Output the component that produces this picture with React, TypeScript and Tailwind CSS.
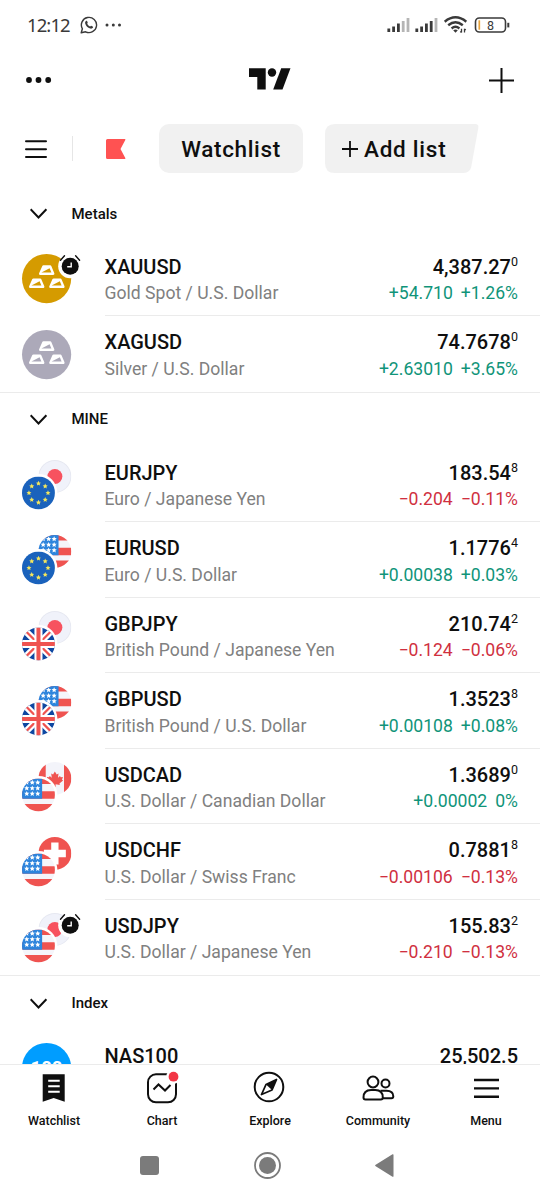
import React from 'react';

type FlagId = 'eu' | 'jp' | 'us' | 'gb' | 'ca' | 'ch';

interface Quote {
  symbol: string;
  description?: string;
  price: string;
  pip?: string;
  change?: string;
  percent?: string;
  up?: boolean;
  flags?: [FlagId, FlagId];
  metal?: string;
  alarm?: boolean;
}

interface Section {
  title: string;
  quotes: Quote[];
}

const sections: Section[] = [
  {
    title: 'Metals',
    quotes: [
      { symbol: 'XAUUSD', description: 'Gold Spot / U.S. Dollar', price: '4,387.27', pip: '0', change: '+54.710', percent: '+1.26%', up: true, metal: '#D59B00', alarm: true },
      { symbol: 'XAGUSD', description: 'Silver / U.S. Dollar', price: '74.7678', pip: '0', change: '+2.63010', percent: '+3.65%', up: true, metal: '#ACA9B9' }
    ]
  },
  {
    title: 'MINE',
    quotes: [
      { symbol: 'EURJPY', description: 'Euro / Japanese Yen', price: '183.54', pip: '8', change: '−0.204', percent: '−0.11%', up: false, flags: ['eu', 'jp'] },
      { symbol: 'EURUSD', description: 'Euro / U.S. Dollar', price: '1.1776', pip: '4', change: '+0.00038', percent: '+0.03%', up: true, flags: ['eu', 'us'] },
      { symbol: 'GBPJPY', description: 'British Pound / Japanese Yen', price: '210.74', pip: '2', change: '−0.124', percent: '−0.06%', up: false, flags: ['gb', 'jp'] },
      { symbol: 'GBPUSD', description: 'British Pound / U.S. Dollar', price: '1.3523', pip: '8', change: '+0.00108', percent: '+0.08%', up: true, flags: ['gb', 'us'] },
      { symbol: 'USDCAD', description: 'U.S. Dollar / Canadian Dollar', price: '1.3689', pip: '0', change: '+0.00002', percent: '0%', up: true, flags: ['us', 'ca'] },
      { symbol: 'USDCHF', description: 'U.S. Dollar / Swiss Franc', price: '0.7881', pip: '8', change: '−0.00106', percent: '−0.13%', up: false, flags: ['us', 'ch'] },
      { symbol: 'USDJPY', description: 'U.S. Dollar / Japanese Yen', price: '155.83', pip: '2', change: '−0.210', percent: '−0.13%', up: false, flags: ['us', 'jp'], alarm: true }
    ]
  },
  {
    title: 'Index',
    quotes: [{ symbol: 'NAS100', price: '25,502.5' }]
  }
];

const starPath = (cx: number, cy: number, r: number) => {
  const points: string[] = [];
  for (let i = 0; i < 10; i++) {
    const radius = i % 2 === 0 ? r : r * 0.48;
    const angle = (Math.PI / 5) * i - Math.PI / 2;
    points.push(`${(cx + radius * Math.cos(angle)).toFixed(2)} ${(cy + radius * Math.sin(angle)).toFixed(2)}`);
  }
  return `M${points.join('L')}Z`;
};

const flagArt: Record<FlagId, React.ReactNode> = {
  eu: (
    <>
      <path fill="#1A62BC" d="M0 0h18v18H0z" />
      {[0, 1, 2, 3, 4, 5, 6, 7].map((i) => (
        <path
          key={i}
          fill="#F5E75C"
          d={starPath(9 + 5.2 * Math.cos((Math.PI / 4) * i), 9 + 5.2 * Math.sin((Math.PI / 4) * i), 1.45)}
        />
      ))}
    </>
  ),
  jp: (
    <>
      <path fill="#E6E8F1" d="M0 0h18v18H0z" />
      <circle cx="9" cy="9" r="8.5" fill="#F0F2FA" />
      <circle cx="9" cy="9" r="4.1" fill="#F7525F" />
    </>
  ),
  us: (
    <>
      <path fill="#F5F5FA" d="M0 0h18v18H0z" />
      <path fill="#EF5350" d="M0 0h18v3H0zM0 7h18v4H0zM0 14h18v4H0z" />
      <path fill="#2D84DC" d="M0 0h11v11H0z" />
      {[2.2, 5.3, 8.3].map((y) =>
        [2.6, 5.6, 8.6].map((x) => <path key={`${x}-${y}`} fill="#fff" d={starPath(x, y, 1.5)} />)
      )}
    </>
  ),
  gb: (
    <>
      <path fill="#0E47A1" d="M0 0h18v18H0z" />
      <path stroke="#fff" strokeWidth="3.6" d="M1 1l16 16M17 1L1 17" />
      <path stroke="#EF5350" strokeWidth="1.2" d="M1 1l16 16M17 1L1 17" />
      <path stroke="#fff" strokeWidth="4.4" d="M9 0v18M0 9h18" />
      <path stroke="#EF5350" strokeWidth="2.2" d="M9 0v18M0 9h18" />
    </>
  ),
  ca: (
    <>
      <path fill="#F3F4FA" d="M0 0h18v18H0z" />
      <path fill="#EF5350" d="M0 0h4v18H0zM14 0h4v18h-4z" />
      <path
        fill="#EF5350"
        d="M9 5.2l1 1.6 1-.5-.3 2.3 1.1-.9.4.7 1.2-.2-.5 1.5.6.4-2 1.6.2.8-2.3-.3v1.6h-.8v-1.6l-2.3.3.2-.8-2-1.6.6-.4-.5-1.5 1.2.2.4-.7 1.1.9L7 6.3l1 .5z"
      />
    </>
  ),
  ch: (
    <>
      <path fill="#EF5350" d="M0 0h18v18H0z" />
      <path fill="#fff" d="M7 3h4v4h4v4h-4v4H7v-4H3V7h4z" />
    </>
  )
};

const PairIcon: React.FC<{ id: string; flags: [FlagId, FlagId] }> = ({ id, flags }) => (
  <>
    <defs>
      <clipPath id={`${id}-flag`}>
        <circle cx="9" cy="9" r="9" />
      </clipPath>
    </defs>
    <g transform="translate(16.4 0) scale(1.83)">
      <g clipPath={`url(#${id}-flag)`}>{flagArt[flags[1]]}</g>
    </g>
    <circle cx="16.4" cy="32.9" r="19" fill="#fff" />
    <g transform="translate(0 16.5) scale(1.83)">
      <g clipPath={`url(#${id}-flag)`}>{flagArt[flags[0]]}</g>
    </g>
  </>
);

const MetalIcon: React.FC<{ color: string }> = ({ color }) => (
  <>
    <circle cx="24.6" cy="24.6" r="24.6" fill={color} />
    {[[17, 11.3], [7, 24.4], [27.2, 24.4]].map(([x, y]) => (
      <g key={x} transform={`translate(${x} ${y})`}>
        <path d="M4.4 1.2h6.8l3 7.2H1.2z" fill="#fff" stroke="#fff" strokeWidth="2.4" strokeLinejoin="round" />
        <path d="M2.4 7.2l8.2-4.3 1.8 4.3z" fill={color} />
      </g>
    ))}
  </>
);

const AlarmBadge = () => (
  <>
    <circle cx="48.2" cy="12.2" r="12" fill="#fff" />
    <circle cx="48.2" cy="12.2" r="8.5" fill="#0F0F0F" />
    <path d="M49.2 8.6v4.2h-4" stroke="#fff" strokeWidth="1.4" fill="none" />
    <path d="M38.5 6.2l4-4.4M53.6 1.8l4 4.4" stroke="#0F0F0F" strokeWidth="1.4" strokeLinecap="round" />
  </>
);

const SymbolIcon: React.FC<{ quote: Quote }> = ({ quote }) => (
  <svg width="49" height="49" viewBox="0 0 49 49" fill="none" className="shrink-0 overflow-visible">
    {quote.flags && <PairIcon id={quote.symbol} flags={quote.flags} />}
    {quote.metal && <MetalIcon color={quote.metal} />}
    {!quote.flags && !quote.metal && (
      <>
        <circle cx="24.6" cy="24.6" r="24.6" fill="#009DFF" />
        <text x="24.5" y="31" textAnchor="middle" fontSize="18.5" fontWeight="700" fill="#fff">100</text>
      </>
    )}
    {quote.alarm && <AlarmBadge />}
  </svg>
);

const QuoteRow: React.FC<{ quote: Quote; last: boolean }> = ({ quote, last }) => (
  <div className={`flex pl-[22px] ${last ? 'h-[76.4px] border-b border-[#EBEBEB]' : 'h-[75.55px]'}`}>
    <div className="pt-[13.2px]">
      <SymbolIcon quote={quote} />
    </div>
    <div className={`ml-[33.5px] flex flex-1 justify-between pr-[22px] pt-[14px] ${last ? '' : 'border-b border-[#EBEBEB]'}`}>
      <div>
        <div className="text-[20px] font-medium leading-[25px] text-[#0F0F0F]">{quote.symbol}</div>
        {quote.description && (
          <div className="mt-[1.5px] text-[17.6px] leading-[24px] text-[#808080]">{quote.description}</div>
        )}
      </div>
      <div className="text-right">
        <div className="flex justify-end text-[20px] font-medium leading-[25px] text-[#0F0F0F]">
          {quote.price}
          {quote.pip && <span className="text-[12.5px] font-normal leading-[13px]">{quote.pip}</span>}
        </div>
        {quote.change && (
          <div className={`mt-[1.5px] flex justify-end gap-2 text-[17.6px] leading-[24px] ${quote.up ? 'text-[#109479]' : 'text-[#D0303F]'}`}>
            <span>{quote.change}</span>
            <span>{quote.percent}</span>
          </div>
        )}
      </div>
    </div>
  </div>
);

const StatusBar = () => (
  <div className="flex h-[50px] shrink-0 items-center pl-[27px] pr-[30px] text-[#3A3A3A]">
    <span className="w-[44px] whitespace-nowrap font-['Noto_Sans',sans-serif] text-[18.5px] leading-none tracking-[-0.9px]">12:12</span>
    <svg width="18" height="18" viewBox="0 0 18 18" fill="none" className="ml-[9px]">
      <path d="M1.2 16.8l1.2-4A7.6 7.6 0 1 1 5.6 15.8z" stroke="currentColor" strokeWidth="1.4" strokeLinejoin="round" />
      <path d="M6 4.9c.8-.4 1.3.2 1.7 1.6.1.6-.6.9-.4 1.4.6 1.2 1.5 2 2.7 2.6.6.2.9-.8 1.5-.6 1.3.5 1.9.9 1.5 1.7-.5 1-1.7 1.3-2.8 1-2.5-.7-4.3-2.5-5-5-.2-1.100 0-2.300.8-2.700z" fill="currentColor" />
    </svg>
    <svg width="17" height="4" viewBox="0 0 17 4" className="ml-[7px]">
      <g fill="currentColor">
        <circle cx="2" cy="2" r="1.5" />
        <circle cx="8.3" cy="2" r="1.5" />
        <circle cx="14.5" cy="2" r="1.5" />
      </g>
    </svg>
    <svg width="124" height="18" viewBox="0 0 124 18" fill="none" className="ml-auto">
      {[0, 28].map((x, n) => (
        <g key={x} strokeWidth="2.8">
          {[3.5, 5.5, 8.5, 11, 14].map((h, i) => (
            <path key={h} d={`M${x + 2.8 + i * 4.8} 16v-${h}`} stroke={i > 2 + n ? '#B5B5B5' : '#3A3A3A'} />
          ))}
        </g>
      ))}
      <g stroke="#3A3A3A" strokeWidth="2.4">
        <path d="M58.7 5.7Q69.5-3 80.3 5.7" />
        <path d="M62.2 9.2Q69.5 3.2 76.8 9.2" />
        <path d="M65.6 12.5Q69.5 9.2 73.4 12.5" />
      </g>
      <path d="M67.2 14.3l2.3 2.5 2.3-2.5q-2.3-1.7-4.6 0z" fill="#3A3A3A" />
      <path d="M75.5 12.8v3.8M78.5 12.8v3.8M74.2 15.5l1.3 1M79.8 14l-1.3-1" stroke="#3A3A3A" strokeWidth="1.3" />
      <rect x="89.5" y="2" width="30" height="14" rx="3.8" stroke="#3A3A3A" strokeWidth="1.6" />
      <path d="M93.3 4.3v9.4" stroke="#E8A33A" strokeWidth="1.7" />
      <path d="M122.3 6.8v4.6" stroke="#3A3A3A" strokeWidth="2" />
      <text x="104.5" y="13.5" textAnchor="middle" fontSize="12.5" fill="#3A3A3A">8</text>
    </svg>
  </div>
);

const Header = () => (
  <div className="flex h-[60px] shrink-0 items-center justify-between px-[26px]">
    <svg width="26" height="6" viewBox="0 0 26 6" fill="#0F0F0F">
      <circle cx="3" cy="3" r="2.9" />
      <circle cx="12.5" cy="3" r="2.9" />
      <circle cx="22.2" cy="3" r="2.9" />
    </svg>
    <svg width="42" height="22" viewBox="0 0 42 22" fill="#0F0F0F" className="-ml-px -mt-[2px]">
      <path d="M0 .3h16.7v21.2H8.3V9H0z" />
      <circle cx="23" cy="4.5" r="4.2" />
      <path d="M32.2.3h9.3l-8 21.2h-9.3z" />
    </svg>
    <svg width="25" height="25" viewBox="0 0 25 25" stroke="#0F0F0F" strokeWidth="2">
      <path d="M12.5 0v25M0 12.500h25" />
    </svg>
  </div>
);

const ListTabs = () => (
  <div className="flex h-[77px] shrink-0 items-center pl-[25px]">
    <svg width="22" height="20" viewBox="0 0 22 20" stroke="#0F0F0F" strokeWidth="2" strokeLinecap="round">
      <path d="M1 2.3h20M1 10.2h20M1 18h20" />
    </svg>
    <div className="ml-[25px] h-[25px] w-px bg-[#E6E6E6]" />
    <svg width="20" height="20" viewBox="0 0 20 20" fill="#FF5252" className="ml-[33px]">
      <path d="M1.5 0h17.3q1 0 .5 1L14.5 10l4.8 9q.5 1-.5 1H1.5Q0 20 0 18.500v-17Q0 0 1.5 0z" />
    </svg>
    <button className="ml-[33px] h-[49px] w-[144px] rounded-[10px] bg-[#F1F1F1] pt-[2px] text-[22.5px] font-medium tracking-[0.65px] text-[#0F0F0F]">
      Watchlist
    </button>
    <button className="relative ml-[22px] flex h-[49px] w-[154px] items-center pl-[17px] text-[22.5px] font-medium tracking-[0.75px] text-[#0F0F0F]">
      <svg width="154" height="49" viewBox="0 0 154 49" fill="#F1F1F1" className="absolute inset-0">
        <path d="M10 0h140q4 0 3.3 4l-7 38.500q-1.200 6.500-7.800 6.500H10Q0 49 0 39V10Q0 0 10 0z" />
      </svg>
      <svg width="16" height="16" viewBox="0 0 16 16" stroke="#0F0F0F" strokeWidth="1.800" className="relative">
        <path d="M8 0v16M0 8h16" />
      </svg>
      <span className="relative ml-[6px] whitespace-nowrap pt-[2px]">Add list</span>
    </button>
  </div>
);

const SectionHeader: React.FC<{ title: string }> = ({ title }) => (
  <div className="flex h-[53.8px] items-center pl-[29.5px]">
    <svg width="18" height="11" viewBox="0 0 18 11" fill="none" stroke="#0F0F0F" strokeWidth="2">
      <path d="M.6 1.3l7.9 8.2 7.9-8.2" />
    </svg>
    <span className="ml-[24px] text-[15px] font-medium text-[#0F0F0F]">{title}</span>
  </div>
);

const navItems = [
  {
    label: 'Watchlist',
    icon: (
      <>
        <path d="M4.7 2.3h22v27.5l-11-3.800-11 3.800z" fill="#0F0F0F" />
        <path d="M10.2 8.8h11.5M10.2 14.3h11.5M10.2 19.800h11.5" stroke="#fff" strokeWidth="2" />
      </>
    )
  },
  {
    label: 'Chart',
    icon: (
      <>
        <rect x="2" y="2.3" width="28" height="28" rx="8" stroke="#0F0F0F" strokeWidth="2" />
        <path d="M7.5 17.5l5-5 6.5 6 5.5-5.5" stroke="#0F0F0F" strokeWidth="2" />
        <circle cx="27.5" cy="4.7" r="7.2" fill="#fff" />
        <circle cx="27.5" cy="4.7" r="4.9" fill="#F23645" />
      </>
    )
  },
  {
    label: 'Explore',
    icon: (
      <>
        <circle cx="15" cy="15" r="14.3" stroke="#0F0F0F" strokeWidth="2" />
        <path d="M22.5 7.5L12 12.5 7.5 22.5 18 18z" stroke="#0F0F0F" strokeWidth="1.8" strokeLinejoin="round" />
        <path d="M22.5 7.5L12 12.5l6 5.5z" fill="#0F0F0F" />
      </>
    )
  },
  {
    label: 'Community',
    icon: (
      <g stroke="#0F0F0F" strokeWidth="2">
        <circle cx="11" cy="10" r="5.400" />
        <circle cx="23.5" cy="11.500" r="4" />
        <path d="M1.5 25.5q0-7.500 7.500-7.500h4.300q7.500 0 7.500 7.500 0 2-2 2H3.500q-2 0-2-2z" />
        <path d="M18.5 18.7h6q6.800 0 6.800 5.600 0 1.900-1.800 1.900h-8.500" />
      </g>
    )
  },
  {
    label: 'Menu',
    icon: <path d="M4 8h25M4 16.4h25M4 24.7h25" stroke="#0F0F0F" strokeWidth="2.4" />
  }
];

const BottomNav = () => (
  <div className="grid h-[66px] shrink-0 grid-cols-5 border-t border-[#EBEBEB] bg-white">
    {navItems.map((item) => (
      <div key={item.label} className="flex flex-col items-center pt-[7px]">
        <svg width="32" height="32" viewBox="0 0 32 32" fill="none" className="overflow-visible">
          {item.icon}
        </svg>
        <span className="mt-[8px] text-[12.5px] font-medium leading-[17px] text-[#0F0F0F]">{item.label}</span>
      </div>
    ))}
  </div>
);

const SystemNav = () => (
  <div className="flex h-[70px] shrink-0 items-center pl-[140px]">
    <div className="h-[19px] w-[19px] rounded-[3px] bg-[#7B7B7B]" />
    <svg width="27" height="27" viewBox="0 0 27 27" fill="none" className="ml-[95px]">
      <circle cx="13.5" cy="13.5" r="12.5" stroke="#7B7B7B" strokeWidth="1.8" />
      <circle cx="13.5" cy="13.5" r="8.5" fill="#7B7B7B" />
    </svg>
    <svg width="19" height="23" viewBox="0 0 19 23" fill="#7B7B7B" className="ml-[94px]">
      <path d="M17.5.3q1-.5 1 .7v21q0 1.2-1 .7L.7 12.2q-1.2-.7 0-1.4z" />
    </svg>
  </div>
);

export default function App() {
  return (
    <div className="flex h-[1200px] w-[540px] flex-col overflow-hidden bg-white font-[Roboto,sans-serif]">
      <StatusBar />
      <Header />
      <ListTabs />
      <div className="min-h-0 flex-1 overflow-hidden">
        {sections.map((section) => (
          <div key={section.title}>
            <SectionHeader title={section.title} />
            {section.quotes.map((quote, index) => (
              <QuoteRow key={quote.symbol} quote={quote} last={index === section.quotes.length - 1} />
            ))}
          </div>
        ))}
      </div>
      <BottomNav />
      <SystemNav />
    </div>
  );
}
